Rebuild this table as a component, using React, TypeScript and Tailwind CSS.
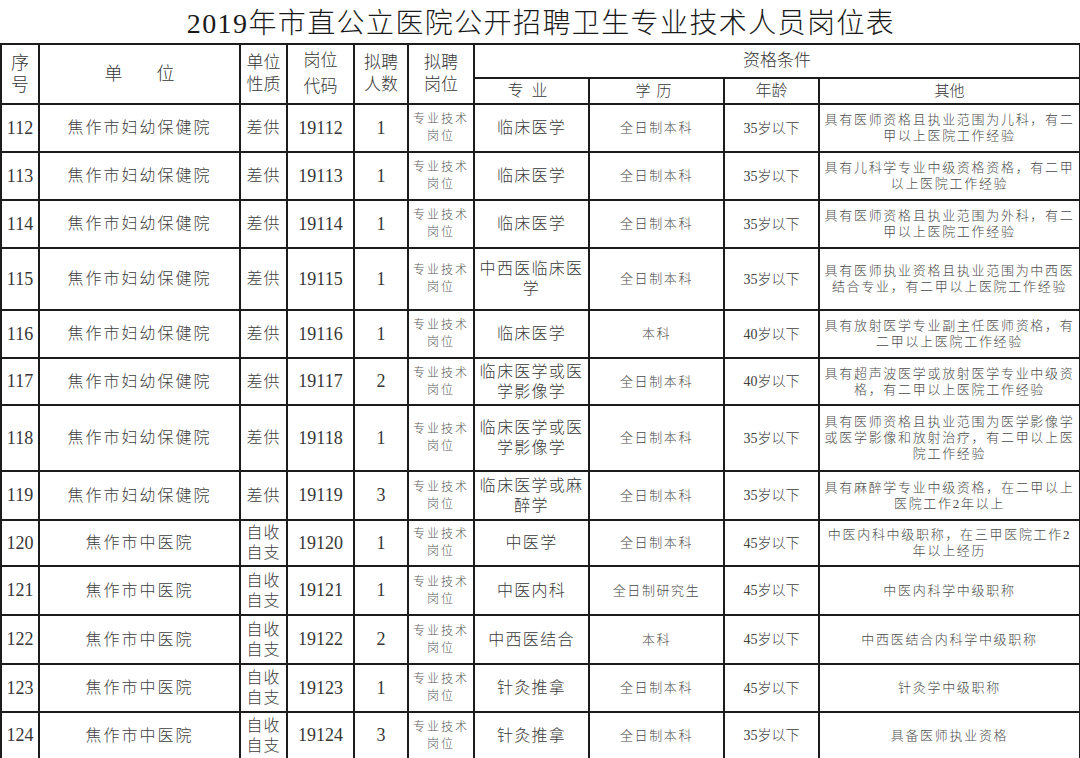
type Row = {
  no: string;
  unit: string;
  nature: string[];
  code: string;
  num: string;
  major: string[];
  edu: string;
  age: string;
  other: string[];
  h: string;
};

const fy = "焦作市妇幼保健院";
const zy = "焦作市中医院";
const cg = ["差供"];
const zs = ["自收", "自支"];

const rows: Row[] = [
  { no: "112", unit: fy, nature: cg, code: "19112", num: "1", major: ["临床医学"], edu: "全日制本科", age: "35岁以下", other: ["具有医师资格且执业范围为儿科，有二", "甲以上医院工作经验"], h: "h-[48px]" },
  { no: "113", unit: fy, nature: cg, code: "19113", num: "1", major: ["临床医学"], edu: "全日制本科", age: "35岁以下", other: ["具有儿科学专业中级资格资格，有二甲", "以上医院工作经验"], h: "h-[48px]" },
  { no: "114", unit: fy, nature: cg, code: "19114", num: "1", major: ["临床医学"], edu: "全日制本科", age: "35岁以下", other: ["具有医师资格且执业范围为外科，有二", "甲以上医院工作经验"], h: "h-[48px]" },
  { no: "115", unit: fy, nature: cg, code: "19115", num: "1", major: ["中西医临床医", "学"], edu: "全日制本科", age: "35岁以下", other: ["具有医师执业资格且执业范围为中西医", "结合专业，有二甲以上医院工作经验"], h: "h-[62px]" },
  { no: "116", unit: fy, nature: cg, code: "19116", num: "1", major: ["临床医学"], edu: "本科", age: "40岁以下", other: ["具有放射医学专业副主任医师资格，有", "二甲以上医院工作经验"], h: "h-[48px]" },
  { no: "117", unit: fy, nature: cg, code: "19117", num: "2", major: ["临床医学或医", "学影像学"], edu: "全日制本科", age: "40岁以下", other: ["具有超声波医学或放射医学专业中级资", "格，有二甲以上医院工作经验"], h: "h-[47px]" },
  { no: "118", unit: fy, nature: cg, code: "19118", num: "1", major: ["临床医学或医", "学影像学"], edu: "全日制本科", age: "35岁以下", other: ["具有医师资格且执业范围为医学影像学", "或医学影像和放射治疗，有二甲以上医", "院工作经验"], h: "h-[66px]" },
  { no: "119", unit: fy, nature: cg, code: "19119", num: "3", major: ["临床医学或麻", "醉学"], edu: "全日制本科", age: "35岁以下", other: ["具有麻醉学专业中级资格，在二甲以上", "医院工作2年以上"], h: "h-[49px]" },
  { no: "120", unit: zy, nature: zs, code: "19120", num: "1", major: ["中医学"], edu: "全日制本科", age: "45岁以下", other: ["中医内科中级职称，在三甲医院工作2", "年以上经历"], h: "h-[46px]" },
  { no: "121", unit: zy, nature: zs, code: "19121", num: "1", major: ["中医内科"], edu: "全日制研究生", age: "45岁以下", other: ["中医内科学中级职称"], h: "h-[49px]" },
  { no: "122", unit: zy, nature: zs, code: "19122", num: "2", major: ["中西医结合"], edu: "本科", age: "45岁以下", other: ["中西医结合内科学中级职称"], h: "h-[49px]" },
  { no: "123", unit: zy, nature: zs, code: "19123", num: "1", major: ["针灸推拿"], edu: "全日制本科", age: "45岁以下", other: ["针灸学中级职称"], h: "h-[48px]" },
  { no: "124", unit: zy, nature: zs, code: "19124", num: "3", major: ["针灸推拿"], edu: "全日制本科", age: "35岁以下", other: ["具备医师执业资格"], h: "h-[47px]" },
];

const cell = "border-2 border-[#1c1c1c] p-0 text-center align-middle";

function Lines({ items, className }: { items: string[]; className: string }) {
  return (
    <div className={className}>
      {items.map((t, i) => (
        <div key={i}>{t}</div>
      ))}
    </div>
  );
}

export default function App() {
  return (
    <div className="w-[1080px] h-[758px] overflow-hidden bg-white font-['Liberation_Serif','Noto_Sans_CJK_SC',serif] font-light text-[#363636]">
      <div className="h-[43px] flex items-center justify-center pt-[4px] pl-[2px] text-[28px] text-[#1a1a1a] tracking-[1.4px]">
        2019年市直公立医院公开招聘卫生专业技术人员岗位表
      </div>
      <table className="table-fixed border-collapse w-[1079px]">
        <colgroup>
          <col className="w-[38px]" />
          <col className="w-[201px]" />
          <col className="w-[47px]" />
          <col className="w-[67px]" />
          <col className="w-[54px]" />
          <col className="w-[66px]" />
          <col className="w-[115px]" />
          <col className="w-[135px]" />
          <col className="w-[95px]" />
          <col className="w-[261px]" />
        </colgroup>
        <thead>
          <tr className="h-[34px]">
            <th rowSpan={2} className={`${cell} font-light text-[18px] leading-[22px]`}>
              <Lines items={["序", "号"]} className="" />
            </th>
            <th rowSpan={2} className={`${cell} font-light text-[18px]`}>
              单<span className="inline-block w-[34px]" />位
            </th>
            <th rowSpan={2} className={`${cell} font-light text-[17px] leading-[22px]`}>
              <Lines items={["单位", "性质"]} className="" />
            </th>
            <th rowSpan={2} className={`${cell} font-light text-[17px] leading-[26px]`}>
              <Lines items={["岗位", "代码"]} className="" />
            </th>
            <th rowSpan={2} className={`${cell} font-light text-[17px] leading-[22px]`}>
              <Lines items={["拟聘", "人数"]} className="" />
            </th>
            <th rowSpan={2} className={`${cell} font-light text-[17px] leading-[22px]`}>
              <Lines items={["拟聘", "岗位"]} className="" />
            </th>
            <th colSpan={4} className={`${cell} font-light text-[17px]`}>
              资格条件
            </th>
          </tr>
          <tr className="h-[25px]">
            <th className={`${cell} font-light text-[16px] tracking-[8px]`}>专业</th>
            <th className={`${cell} font-light text-[15px] tracking-[6px]`}>学历</th>
            <th className={`${cell} font-light text-[16px]`}>年龄</th>
            <th className={`${cell} font-light text-[15px]`}>其他</th>
          </tr>
        </thead>
        <tbody>
          {rows.map((r) => (
            <tr key={r.no} className={r.h}>
              <td className={`${cell} text-[18px]`}>{r.no}</td>
              <td className={`${cell} text-[16px] tracking-[2px] text-[#404040]`}>{r.unit}</td>
              <td className={`${cell} text-[16px] leading-[20px] tracking-[1px] text-[#404040]`}>
                <Lines items={r.nature} className="" />
              </td>
              <td className={`${cell} text-[18px]`}>{r.code}</td>
              <td className={`${cell} text-[18px]`}>{r.num}</td>
              <td className={`${cell} text-[12px] leading-[17px] tracking-[2px] text-[#5a5a5a]`}>
                <Lines items={["专业技术", "岗位"]} className="" />
              </td>
              <td className={`${cell} text-[16px] leading-[20px] tracking-[1.3px] text-[#383838]`}>
                <Lines items={r.major} className="" />
              </td>
              <td className={`${cell} text-[13px] tracking-[1.6px] text-[#4a4a4a]`}>{r.edu}</td>
              <td className={`${cell} text-[14px] text-[#404040]`}>{r.age}</td>
              <td className={`${cell} text-[13px] leading-[16px] tracking-[1.7px] text-[#4a4a4a]`}>
                <Lines items={r.other} className="" />
              </td>
            </tr>
          ))}
        </tbody>
      </table>
    </div>
  );
}
